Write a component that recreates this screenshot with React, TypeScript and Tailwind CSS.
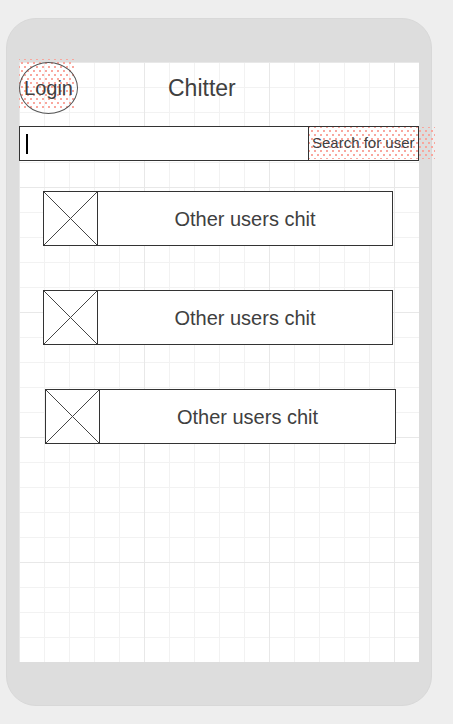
import React from "react";

const dots =
  "bg-[radial-gradient(circle,#f9a59c_0.7px,transparent_1px),radial-gradient(circle,#f9a59c_0.7px,transparent_1px)] [background-size:6px_8px] [background-position:0_0,3px_4px]";

function Chit({ shift = false }: { shift?: boolean }) {
  return (
    <div
      className={`flex h-[55px] border border-[#333333] bg-white ${
        shift ? "ml-[26px] w-[351px]" : "ml-[24px] w-[350px]"
      }`}
    >
      <div className="h-full w-[54px] shrink-0 border-r border-[#333333]">
        <svg width="100%" height="100%" viewBox="0 0 54 53" preserveAspectRatio="none">
          <line x1="0" y1="0" x2="54" y2="53" stroke="#444" strokeWidth="1" />
          <line x1="54" y1="0" x2="0" y2="53" stroke="#444" strokeWidth="1" />
        </svg>
      </div>
      <div className="flex flex-1 items-center justify-center text-[20px] text-[#404040]">
        Other users chit
      </div>
    </div>
  );
}

export default function App() {
  return (
    <div className="h-[724px] w-[453px] overflow-hidden bg-[#eeeeee] pt-[18px] font-['Liberation_Sans',Arial,sans-serif]">
      <div className="ml-[6px] h-[688px] w-[426px] rounded-[30px] border border-[#d8d8d8] bg-[#dddddd] px-[12px] pt-[43px]">
        <div className="relative h-[600px] w-[400px] bg-white bg-[linear-gradient(to_right,#e8e8e8_1px,transparent_1px),linear-gradient(to_bottom,#e8e8e8_1px,transparent_1px),linear-gradient(to_right,#f2f2f2_1px,transparent_1px),linear-gradient(to_bottom,#f2f2f2_1px,transparent_1px)] [background-size:125px_125px,125px_125px,25px_25px,25px_25px]">
          {/* header */}
          <div className="relative flex h-[52px] items-center">
            <div className={`absolute left-0 top-[-3px] h-[51px] w-[56px] ${dots}`} />
            <div className="relative flex h-[52px] w-[59px] items-center justify-center rounded-[50%] border border-[#555555] text-[20px] text-[#404040]">
              Login
            </div>
            <div className="ml-[90px] text-[23px] text-[#404040]">Chitter</div>
          </div>

          {/* search */}
          <div className="relative mt-[12px] flex h-[35px] w-[400px] border border-[#333333] bg-white">
            <div className="flex w-[289px] items-center border-r border-[#333333] pl-[6px]">
              <div className="h-[20px] w-[2px] bg-black" />
            </div>
            <div className={`absolute left-[289px] top-0 h-[32px] w-[126px] ${dots}`} />
            <div className="relative flex flex-1 items-center pl-[3px] text-[15px] text-[#404040]">
              Search for user
            </div>
          </div>

          {/* chits */}
          <div className="mt-[30px] flex flex-col gap-[44px]">
            <Chit />
            <Chit />
            <Chit shift />
          </div>
        </div>
      </div>
    </div>
  );
}
